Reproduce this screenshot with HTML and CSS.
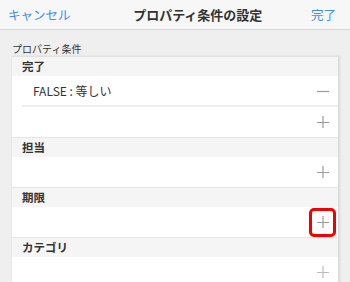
FILE: index.html
```html
<!DOCTYPE html>
<html lang="ja">
<head>
    <meta charset="UTF-8">
    <meta name="viewport" content="width=device-width, initial-scale=1.0">
    <title>プロパティ条件の設定</title>
    <link rel="stylesheet" href="styles.css">
</head>
<body>

    <div class="navbar">
        <a class="nav-btn">キャンセル</a>
        <span class="nav-title">プロパティ条件の設定</span>
        <a class="nav-btn">完了</a>
    </div>

    <div class="content">
        <div class="caption">プロパティ条件</div>

        <div class="panel">
            <div class="section-head">完了</div>
            <div class="row item">
                <span class="row-text">FALSE : 等しい</span>
                <span class="icon-btn">
                    <svg width="12" height="12" viewBox="0 0 12 12"><path d="M0 6.5h12" stroke="#9a9a9a" stroke-width="1.2"/></svg>
                </span>
            </div>
            <div class="row">
                <span class="row-text"></span>
                <span class="icon-btn">
                    <svg width="12" height="12" viewBox="0 0 12 12"><path d="M0 6.5h12M6 0v12" stroke="#9a9a9a" stroke-width="1.2"/></svg>
                </span>
            </div>

            <div class="section-head">担当</div>
            <div class="row">
                <span class="row-text"></span>
                <span class="icon-btn">
                    <svg width="12" height="12" viewBox="0 0 12 12"><path d="M0 6.5h12M6 0v12" stroke="#9a9a9a" stroke-width="1.2"/></svg>
                </span>
            </div>

            <div class="section-head">期限</div>
            <div class="row">
                <span class="row-text"></span>
                <!-- 注目させたい追加ボタン -->
                <span class="icon-btn marked">
                    <svg width="12" height="12" viewBox="0 0 12 12"><path d="M0 6.5h12M6 0v12" stroke="#9a9a9a" stroke-width="1.2"/></svg>
                </span>
            </div>

            <div class="section-head">カテゴリ</div>
            <div class="row">
                <span class="row-text"></span>
                <span class="icon-btn faded">
                    <svg width="12" height="12" viewBox="0 0 12 12"><path d="M0 6.5h12M6 0v12" stroke="#9a9a9a" stroke-width="1.2"/></svg>
                </span>
            </div>
        </div>
    </div>

</body>
</html>
```

FILE: styles.css
```css
body { margin: 0; background-color: #efefef; font-family: "Noto Sans CJK JP", "Liberation Sans", sans-serif; color: #333; overflow: hidden; }
.navbar { height: 29px; display: flex; align-items: center; justify-content: space-between; padding: 0 14px 0 8px; background: #f7f7f7; border-bottom: 1px solid #d9d9d9; }
.nav-btn { color: #3d8ee6; font-size: 12.5px; cursor: pointer; }
.nav-title { font-size: 13px; font-weight: bold; color: #333; margin-left: 14px; }
.content { padding: 12px 12px 0 12px; }
.caption { font-size: 10px; line-height: 14px; color: #333; margin-bottom: 1px; }
.panel { width: 326px; background: #fff; box-shadow: 1px 0 2px 1px rgba(0, 0, 0, 0.09); }
.section-head { height: 19px; line-height: 19px; padding-left: 10px; background: #f5f5f5; border-top: 1px solid #e6e6e6; font-size: 11.5px; font-weight: bold; color: #333; }
.section-head:first-child { border-top: none; }
.row { height: 30px; display: flex; align-items: center; justify-content: space-between; padding-right: 2px; }
.item { margin-left: 10px; padding-left: 11px; border-bottom: 2px solid #eeeeee; height: 29px; }
.row-text { font-size: 12px; color: #333; }
.icon-btn { width: 21px; height: 23px; display: flex; align-items: center; justify-content: center; border: 3px solid transparent; border-radius: 5px; }
.icon-btn.marked { border-color: #f00000; }
.icon-btn.faded svg path { stroke: #bdbdbd; }
```
